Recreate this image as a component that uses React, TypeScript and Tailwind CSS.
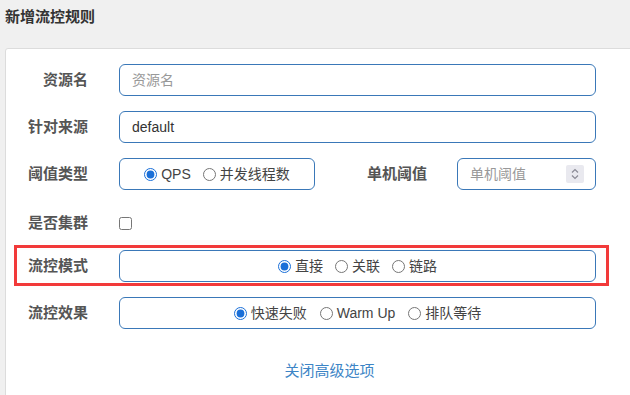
const font = { fontFamily: '"Liberation Sans", "Noto Sans CJK SC", sans-serif' };

const styles = {
  row: "flex items-center mx-[8px] border-[3px] pt-[2px] pb-[1px] pr-[10px]",
  label: "w-[71px] shrink-0 text-right text-[15px] font-bold text-[#555]",
  box: "h-[32px] border border-[#3a78b8] rounded-[6px] bg-white",
  radio: "m-0 w-[13px] h-[13px] accent-[#1a6fd8]",
};

const Radio = ({ label, checked, name }: { label: string; checked?: boolean; name: string }) => (
  <label className="flex items-center gap-[4px] text-[14px] text-[#444]">
    <input type="radio" name={name} defaultChecked={checked} className={styles.radio} />
    <span>{label}</span>
  </label>
);

const App = () => {
  return (
    <div className="w-[630px] h-[395px] overflow-hidden bg-[#f0f0f0]" style={font}>
      <div className="h-[48px] pl-[5px] pt-[6px] text-[15px] font-bold text-[#333]">
        新增流控规则
      </div>
      <div className="ml-[5px] w-[650px] h-[400px] bg-white border border-[#dcdcdc] rounded-[3px] pt-[10px]">
        <div className="w-[611px] flex flex-col gap-[6px]">
          <div className={`${styles.row} border-transparent`}>
            <div className={styles.label}>资源名</div>
            <input
              placeholder="资源名"
              className={`${styles.box} ml-[31px] flex-1 px-[12px] text-[14px] placeholder:text-[#999] outline-none`}
            />
          </div>

          <div className={`${styles.row} border-transparent`}>
            <div className={styles.label}>针对来源</div>
            <input
              defaultValue="default"
              className={`${styles.box} ml-[31px] flex-1 px-[12px] text-[14px] text-[#333] outline-none`}
            />
          </div>

          <div className={`${styles.row} border-transparent`}>
            <div className={styles.label}>阈值类型</div>
            <div className={`${styles.box} ml-[31px] w-[196px] flex items-center justify-center gap-[12px]`}>
              <Radio name="grade" label="QPS" checked />
              <Radio name="grade" label="并发线程数" />
            </div>
            <div className="w-[112px] shrink-0 text-right text-[15px] font-bold text-[#555]">单机阈值</div>
            <div className={`${styles.box} relative ml-[30px] flex-1 flex items-center`}>
              <input
                placeholder="单机阈值"
                className="w-full h-full bg-transparent px-[12px] text-[14px] placeholder:text-[#999] outline-none"
              />
              <div className="absolute right-[11px] top-[6px] w-[18px] h-[18px] bg-[#e9e9ef] rounded-[2px] flex flex-col items-center justify-center">
                <svg width="10" height="14" viewBox="0 0 10 14" fill="none" stroke="#8a8a95" strokeWidth="1.2">
                  <path d="M2 5.5 L5 2.5 L8 5.5" />
                  <path d="M2 8.5 L5 11.5 L8 8.5" />
                </svg>
              </div>
            </div>
          </div>

          <div className={`${styles.row} border-transparent h-[39px] pt-[9px]`}>
            <div className={styles.label}>是否集群</div>
            <input type="checkbox" className="ml-[31px] m-0 w-[13px] h-[13px]" />
          </div>

          <div className={`${styles.row} border-[#f23a3a]`}>
            <div className={styles.label}>流控模式</div>
            <div className={`${styles.box} ml-[31px] flex-1 flex items-center justify-center gap-[12px]`}>
              <Radio name="strategy" label="直接" checked />
              <Radio name="strategy" label="关联" />
              <Radio name="strategy" label="链路" />
            </div>
          </div>

          <div className={`${styles.row} border-transparent`}>
            <div className={styles.label}>流控效果</div>
            <div className={`${styles.box} ml-[31px] flex-1 flex items-center justify-center gap-[13px]`}>
              <Radio name="behavior" label="快速失败" checked />
              <Radio name="behavior" label="Warm Up" />
              <Radio name="behavior" label="排队等待" />
            </div>
          </div>

          <div className="mt-[21px] pl-[36px] text-center text-[15px] text-[#3d85c6]">
            <a className="cursor-pointer">关闭高级选项</a>
          </div>
        </div>
      </div>
    </div>
  );
};

export default App;
